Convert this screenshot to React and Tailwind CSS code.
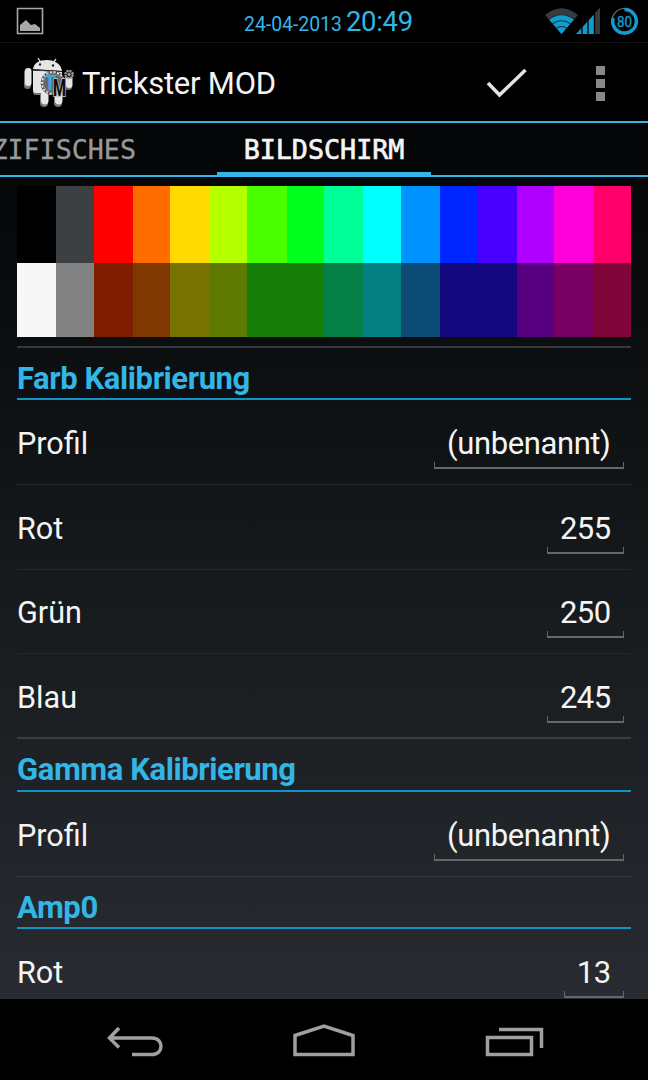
const ROW_ONE = ['#000000', '#3c4043', '#ff0000', '#ff6d00', '#ffd900', '#b4ff00', '#4bff00', '#00ff1c', '#00ff98', '#00ffff', '#0092ff', '#0026ff', '#4a00ff', '#b000ff', '#ff00db', '#ff006b'];
const ROW_TWO = ['#f7f7f7', '#828282', '#801c00', '#7f3800', '#787300', '#5f7a00', '#187e0a', '#187e0a', '#048046', '#048083', '#0b4b76', '#14087e', '#14087e', '#560080', '#780062', '#80063a'];

const RobotLogo = () => (
  <svg className="h-[54px] w-[54px] shrink-0" viewBox="0 0 54 54" fill="none">
    <g fill="#777">
      <rect x="1" y="14" width="7" height="20" rx="3.5" />
      <rect x="17" y="34" width="8" height="18" rx="4" />
      <rect x="31" y="34" width="8" height="18" rx="4" />
      <rect x="42" y="20" width="7" height="15" rx="3.5" />
      <path d="M10 18h29v19q0 3-3 3H13q-3 0-3-3z" />
    </g>
    <g fill="#e6e6e6">
      <path d="M10 14C11 8 16 5 24 5s14 4 15 11z" />
      <path d="M10 15.500l29 1.500v19q0 2-3 2H13q-3 0-3-3z" />
      <rect x="2" y="13" width="6.500" height="18" rx="3.200" />
      <rect x="18" y="34" width="7.500" height="15.500" rx="3.700" />
      <rect x="32" y="34" width="7.500" height="15.500" rx="3.700" />
      <rect x="43" y="20" width="6.500" height="13" rx="3.200" />
    </g>
    <path d="M10 15l29 1.500" stroke="#333" strokeWidth="1.200" />
    <path d="M15 3l3 5M33 4l-3 4" stroke="#ddd" strokeWidth="1.300" />
    <circle cx="17" cy="9.500" r="1.200" fill="#222" />
    <circle cx="30" cy="10.500" r="1.200" fill="#222" />
    <circle cx="30" cy="28" r="9.500" fill="#666" />
    <circle cx="30" cy="28" r="11" stroke="#333" strokeWidth="2.500" />
    <circle cx="30" cy="28" r="11" stroke="#d8d8d8" strokeWidth="2" strokeDasharray="2.500 1.200" />
    <circle cx="46" cy="19.500" r="3.700" fill="#222" stroke="#a5a5a5" strokeWidth="2.200" strokeDasharray="2 0.900" />
    <circle cx="46" cy="19.500" r="1.400" fill="#aaa" />
    <g fontFamily="Roboto, sans-serif" fontWeight="bold">
      <text x="30" y="41" fontSize="23" textLength="13" lengthAdjust="spacingAndGlyphs" fill="#0a0a0a" stroke="#b9b9b9" strokeWidth="2" paintOrder="stroke">M</text>
      <text x="21" y="34.500" fontSize="20" fill="#27b2ee">T</text>
    </g>
  </svg>
);

const Heading = ({ children, height = 'h-[52px]' }) => (
  <h2 className={`border-b-2 border-[#0f94c7] pt-[12px] text-[31px] leading-[38px] font-bold tracking-[-0.41px] text-[#33b5e5] ${height}`}>
    {children}
  </h2>
);

const Row = ({ label, value, width, tracking = 'tracking-[-0.6px] pr-[13.5px]', border = 'border-b border-[#25292c]', height = 'h-[85px]', pad = 'pt-[24px]' }) => (
  <div className={`flex justify-between leading-[40px] ${height} ${border} ${pad}`}>
    <span className="text-[30.6px]">{label}</span>
    <div className={`relative mr-[7px] h-[45px] text-right text-[31px] ${tracking} ${width}`}>
      {value}
      <i className="absolute inset-x-0 bottom-0 h-[7px] border-x border-b-2 border-[#65686b]" />
    </div>
  </div>
);

export default function App() {
  return (
    <div className="flex h-[1080px] w-[648px] flex-col overflow-hidden bg-black text-[#f4f4f4] [font-family:Roboto,sans-serif]">
      <header className="flex h-[43px] shrink-0 items-center border-b border-[#141414] px-4">
        <svg className="h-7 w-7" viewBox="0 0 28 28">
          <path d="M1.500 1.500h25v25h-25z" fill="none" stroke="#a5a8ab" strokeWidth="1.600" />
          <path d="M4 24v-6l6-5 5 5 4-1 5 4v3z" fill="#a8a8a8" />
        </svg>
        <div className="mt-px ml-[200px] flex items-baseline text-[#33b5e5]">
          <span className="text-[19.4px]">24-04-2013</span>
          <span className="ml-1 text-[27.5px] leading-[40px] tracking-[-0.3px]">20:49</span>
        </div>
        <svg className="-mr-[8px] ml-auto h-[32px] w-[96px]" viewBox="544 5 96 32">
          <path d="M545 15Q561.500 1.500 578 15L561.500 34z" fill="#373b3e" />
          <path d="M549 19.500Q561.500 10 574 19.500L561.500 34z" fill="#129bcf" />
          <path d="M548.500 19.500q13-9.500 26 0M552 24q9.500-6.500 19 0M556 28.500q5.500-4 11 0" stroke="#17313b" strokeWidth="1.200" fill="none" />
          <path d="M576 34L600 8v26z" fill="#129bcf" />
          <path d="M595 13.400L600 8v26h-5z" fill="#373b3e" />
          <path d="M582 8v26M588 8v26M594.500 8v26" stroke="#000" strokeWidth="1.300" />
          <circle cx="624.500" cy="21" r="12.500" fill="none" stroke="#777" strokeWidth="1.200" />
          <path d="M624.500 9.500a11.800 11.800 0 1 1-11.300 8.500" fill="none" stroke="#129bcf" strokeWidth="3.500" />
          <text x="617" y="26.500" fontSize="15" textLength="15" lengthAdjust="spacingAndGlyphs" fill="#129bcf" stroke="#129bcf" strokeWidth="0.4">80</text>
        </svg>
      </header>

      <div className="flex h-[80px] shrink-0 items-center border-b-2 border-[#33b5e5] pr-[43px] pl-[23px]">
        <RobotLogo />
        <h1 className="mt-[4px] ml-[5px] text-[31px] tracking-[-0.23px]">Trickster MOD</h1>
        <svg className="mt-px ml-auto h-[32px] w-[42px]" viewBox="0 0 42 32">
          <path d="M2 16l11.500 12L39.500 3" fill="none" stroke="#e4e4e4" strokeWidth="3.500" />
        </svg>
        <div className="mt-[2px] ml-[68px] flex flex-col gap-[4px]">
          <i className="size-[9px] bg-[#888]" />
          <i className="size-[9px] bg-[#888]" />
          <i className="size-[9px] bg-[#888]" />
        </div>
      </div>

      <main className="flex min-h-0 flex-1 flex-col overflow-hidden bg-linear-to-b from-[#040506] via-[#15191b] to-[#282c32]">
        <nav className="flex h-[54px] shrink-0 border-b-2 border-[#33b5e5] text-[26.7px] leading-[54px] [font-family:'DejaVu_Sans_Mono',monospace]">
          <span className="flex w-[217px] justify-end pr-[81px] text-[#999] [-webkit-text-stroke:0.3px]">ZIFISCHES</span>
          <span className="h-[53px] w-[214px] border-b-4 border-[#33b5e5] text-center [-webkit-text-stroke:0.7px]">BILDSCHIRM</span>
        </nav>
        <div className="mx-[17px]">
          <div className="mt-[9px] grid h-[151px] grid-cols-[39fr_38fr_39fr_37fr_40fr_37fr_40fr_37fr_39fr_38fr_39fr_37fr_40fr_37fr_40fr_37fr] grid-rows-[77px_74px]">
            {[...ROW_ONE, ...ROW_TWO].map((color, i) => (
              <i key={i} style={{ backgroundColor: color }} />
            ))}
          </div>
          <div className="mt-[9px] h-[2px] bg-[#36393b]" />
          <Heading>Farb Kalibrierung</Heading>
          <Row label="Profil" value="(unbenannt)" width="w-[190px]" tracking="tracking-[-0.4px] pr-[13.5px]" />
          <Row label="Rot" value="255" width="w-[77px]" />
          <Row label="Grün" value="250" width="w-[77px]" height="h-[84px]" pad="pt-[23px]" />
          <Row label="Blau" value="245" width="w-[77px]" border="border-b-2 border-[#3b3e41]" />
          <Heading height="h-[53px]">Gamma Kalibrierung</Heading>
          <Row label="Profil" value="(unbenannt)" width="w-[190px]" tracking="tracking-[-0.4px] pr-[13.5px]" border="border-b border-[#383b3f]" />
          <Heading>Amp0</Heading>
          <Row label="Rot" value="13" width="w-[60px]" />
        </div>
      </main>

      <footer className="flex h-[81px] shrink-0 items-center bg-black">
        <svg className="h-[81px] w-[648px]" viewBox="0 999 648 81" fill="none" stroke="#a0a0a0" strokeWidth="3.500">
          <path d="M119 1028l-9.500 10 9.500 9.500M109 1038h43c12 0 12 16.500 0 16.500h-20" />
          <path d="M295 1035.500L324 1026l29 9.500V1054.500h-58z" />
          <path d="M487.500 1037.500h44v17h-44zM499 1029.500h42.500v18.500" />
        </svg>
      </footer>
    </div>
  );
}
